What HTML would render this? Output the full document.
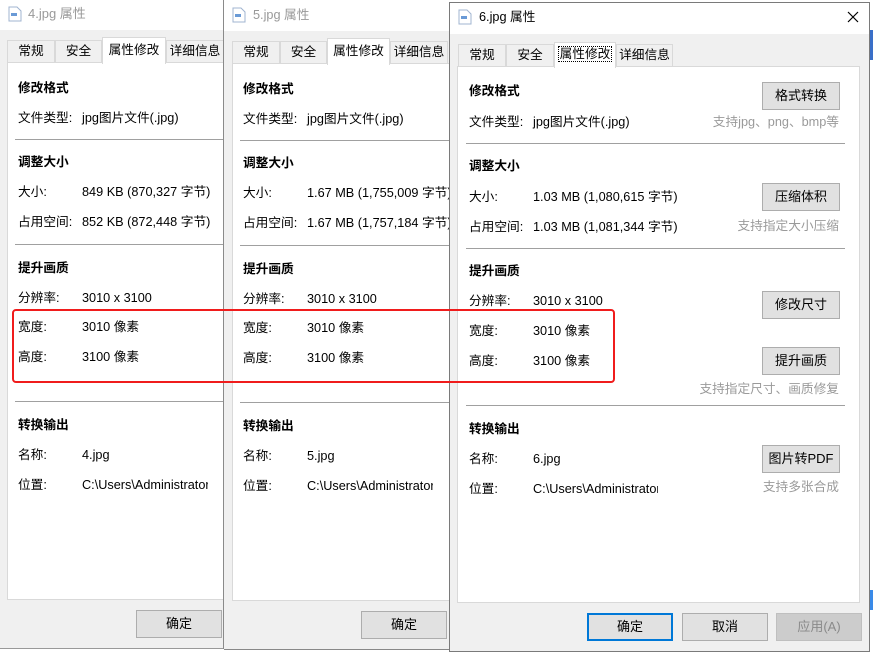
<!DOCTYPE html><html><head><meta charset="utf-8"><style>
*{margin:0;padding:0;box-sizing:border-box}
body{width:873px;height:656px;position:relative;overflow:hidden;background:#fff;font-family:"Liberation Sans","Noto Sans CJK SC",sans-serif;font-size:12.7px;color:#000}
.a{position:absolute;white-space:nowrap;line-height:16px}
.win{position:absolute;background:#f0f0f0;overflow:hidden}
.bx{position:absolute}
.b{font-weight:bold}
.btn{position:absolute;background:#e1e1e1;border:1px solid #adadad;text-align:center;line-height:25px;font-size:13px}
.hint{position:absolute;color:#9a9a9a;white-space:nowrap;line-height:16px;text-align:right}
.hr{position:absolute;height:1px;background:#a0a0a0}
.tab{position:absolute;border:1px solid #d9d9d9;border-bottom:none;background:#f0f0f0;text-align:center;line-height:20px}
</style></head><body>
<div style="position:absolute;left:869px;top:30px;width:4px;height:30px;background:#3a6fc8"></div>
<div style="position:absolute;left:869px;top:590px;width:4px;height:20px;background:#3a8ae8"></div>

<!-- window 1 -->
<div class="win" style="left:0;top:0;width:224px;height:649px;border-bottom:1px solid #999">
<div class="bx" style="left:0;top:0;width:224px;height:30px;background:#fff"></div>
<svg class="bx" style="left:8px;top:6px" width="14" height="16"><path d="M1 1h8l4 4v10H1z" fill="#fff" stroke="#a0b4d0"/><rect x="3" y="7" width="6" height="3" fill="#6a9ad6"/></svg>
<div class="a" style="left:28px;top:6px;color:#999;font-size:13px">4.jpg 属性</div>
<div class="tab" style="left:7px;top:40px;width:48px;height:23px">常规</div>
<div class="tab" style="left:55px;top:40px;width:47px;height:23px">安全</div>
<div class="tab" style="left:166px;top:40px;width:58px;height:23px">详细信息</div>
<div class="bx" style="left:7px;top:62px;width:230px;height:538px;background:#fff;border:1px solid #d9d9d9"></div>
<div class="tab" style="left:102px;top:37px;width:64px;height:27px;background:#fff;line-height:24px">属性修改</div>
<div class="a b" style="left:18px;top:80px">修改格式</div>
<div class="a" style="left:18px;top:110px">文件类型:</div><div class="a" style="left:82px;top:110px">jpg图片文件(.jpg)</div>
<div class="hr" style="left:15px;top:139px;width:209px"></div>
<div class="a b" style="left:18px;top:154px">调整大小</div>
<div class="a" style="left:18px;top:184px">大小:</div><div class="a" style="left:82px;top:184px">849 KB (870,327 字节)</div>
<div class="a" style="left:18px;top:214px">占用空间:</div><div class="a" style="left:82px;top:214px">852 KB (872,448 字节)</div>
<div class="hr" style="left:15px;top:244px;width:209px"></div>
<div class="a b" style="left:18px;top:260px">提升画质</div>
<div class="a" style="left:18px;top:290px">分辨率:</div><div class="a" style="left:82px;top:290px">3010 x 3100</div>
<div class="a" style="left:18px;top:319px">宽度:</div><div class="a" style="left:82px;top:319px">3010 像素</div>
<div class="a" style="left:18px;top:349px">高度:</div><div class="a" style="left:82px;top:349px">3100 像素</div>
<div class="hr" style="left:15px;top:401px;width:209px"></div>
<div class="a b" style="left:18px;top:417px">转换输出</div>
<div class="a" style="left:18px;top:447px">名称:</div><div class="a" style="left:82px;top:447px">4.jpg</div>
<div class="a" style="left:18px;top:477px">位置:</div><div class="a" style="left:82px;top:477px;width:126px;overflow:hidden">C:\Users\Administrator</div>
<div class="btn" style="left:136px;top:610px;width:86px;height:28px">确定</div>
</div>
<div class="bx" style="left:223px;top:0;width:1px;height:649px;background:#8a8a8a"></div>

<!-- window 2 -->
<div class="win" style="left:224px;top:0;width:227px;height:650px;border-bottom:1px solid #888">
<div class="bx" style="left:0;top:0;width:227px;height:31px;background:#fff"></div>
<svg class="bx" style="left:8px;top:7px" width="14" height="16"><path d="M1 1h8l4 4v10H1z" fill="#fff" stroke="#a0b4d0"/><rect x="3" y="7" width="6" height="3" fill="#6a9ad6"/></svg>
<div class="a" style="left:29px;top:7px;color:#999">5.jpg 属性</div>
<div class="tab" style="left:8px;top:41px;width:48px;height:23px">常规</div>
<div class="tab" style="left:56px;top:41px;width:47px;height:23px">安全</div>
<div class="tab" style="left:166px;top:41px;width:58px;height:23px">详细信息</div>
<div class="bx" style="left:8px;top:63px;width:230px;height:538px;background:#fff;border:1px solid #d9d9d9"></div>
<div class="tab" style="left:103px;top:38px;width:63px;height:27px;background:#fff;line-height:24px">属性修改</div>
<div class="a b" style="left:19px;top:81px">修改格式</div>
<div class="a" style="left:19px;top:111px">文件类型:</div><div class="a" style="left:83px;top:111px">jpg图片文件(.jpg)</div>
<div class="hr" style="left:16px;top:140px;width:211px"></div>
<div class="a b" style="left:19px;top:155px">调整大小</div>
<div class="a" style="left:19px;top:185px">大小:</div><div class="a" style="left:83px;top:185px">1.67 MB (1,755,009 字节)</div>
<div class="a" style="left:19px;top:215px">占用空间:</div><div class="a" style="left:83px;top:215px">1.67 MB (1,757,184 字节)</div>
<div class="hr" style="left:16px;top:245px;width:211px"></div>
<div class="a b" style="left:19px;top:261px">提升画质</div>
<div class="a" style="left:19px;top:291px">分辨率:</div><div class="a" style="left:83px;top:291px">3010 x 3100</div>
<div class="a" style="left:19px;top:320px">宽度:</div><div class="a" style="left:83px;top:320px">3010 像素</div>
<div class="a" style="left:19px;top:350px">高度:</div><div class="a" style="left:83px;top:350px">3100 像素</div>
<div class="hr" style="left:16px;top:402px;width:211px"></div>
<div class="a b" style="left:19px;top:418px">转换输出</div>
<div class="a" style="left:19px;top:448px">名称:</div><div class="a" style="left:83px;top:448px">5.jpg</div>
<div class="a" style="left:19px;top:478px">位置:</div><div class="a" style="left:83px;top:478px;width:126px;overflow:hidden">C:\Users\Administrator</div>
<div class="btn" style="left:137px;top:611px;width:86px;height:28px">确定</div>
</div>

<!-- window 3 -->
<div class="win" style="left:449px;top:2px;width:421px;height:650px;border:1px solid #7a7a7a">
<div class="bx" style="left:0;top:0;width:421px;height:31px;background:#fff"></div>
<svg class="bx" style="left:8px;top:6px" width="14" height="16"><path d="M1 1h8l4 4v10H1z" fill="#fff" stroke="#a0b4d0"/><rect x="3" y="7" width="6" height="3" fill="#6a9ad6"/></svg>
<div class="a" style="left:29px;top:6px">6.jpg 属性</div>
<svg class="bx" style="left:397px;top:8px" width="12" height="12"><path d="M1 1L11 11M11 1L1 11" stroke="#000" stroke-width="1.2"/></svg>
<div class="tab" style="left:8px;top:41px;width:48px;height:24px">常规</div>
<div class="tab" style="left:56px;top:41px;width:48px;height:24px">安全</div>
<div class="tab" style="left:166px;top:41px;width:57px;height:24px">详细信息</div>
<div class="bx" style="left:7px;top:63px;width:403px;height:537px;background:#fff;border:1px solid #d9d9d9"></div>
<div class="tab" style="left:104px;top:39px;width:62px;height:26px;background:#fff;line-height:22px"><span style="outline:1px dotted #000;padding:0 1px">属性修改</span></div>
<div class="a b" style="left:19px;top:80px">修改格式</div>
<div class="btn" style="left:312px;top:79px;width:78px;height:28px">格式转换</div>
<div class="a" style="left:19px;top:111px">文件类型:</div><div class="a" style="left:83px;top:111px">jpg图片文件(.jpg)</div>
<div class="hint" style="right:30px;top:111px">支持jpg、png、bmp等</div>
<div class="hr" style="left:16px;top:140px;width:379px"></div>
<div class="a b" style="left:19px;top:155px">调整大小</div>
<div class="a" style="left:19px;top:186px">大小:</div><div class="a" style="left:83px;top:186px">1.03 MB (1,080,615 字节)</div>
<div class="btn" style="left:312px;top:180px;width:78px;height:28px">压缩体积</div>
<div class="a" style="left:19px;top:216px">占用空间:</div><div class="a" style="left:83px;top:216px">1.03 MB (1,081,344 字节)</div>
<div class="hint" style="right:30px;top:215px">支持指定大小压缩</div>
<div class="hr" style="left:16px;top:245px;width:379px"></div>
<div class="a b" style="left:19px;top:260px">提升画质</div>
<div class="a" style="left:19px;top:290px">分辨率:</div><div class="a" style="left:83px;top:290px">3010 x 3100</div>
<div class="btn" style="left:312px;top:288px;width:78px;height:28px">修改尺寸</div>
<div class="a" style="left:19px;top:320px">宽度:</div><div class="a" style="left:83px;top:320px">3010 像素</div>
<div class="a" style="left:19px;top:350px">高度:</div><div class="a" style="left:83px;top:350px">3100 像素</div>
<div class="btn" style="left:312px;top:344px;width:78px;height:28px">提升画质</div>
<div class="hint" style="right:30px;top:378px">支持指定尺寸、画质修复</div>
<div class="hr" style="left:16px;top:402px;width:379px"></div>
<div class="a b" style="left:19px;top:418px">转换输出</div>
<div class="a" style="left:19px;top:448px">名称:</div><div class="a" style="left:83px;top:448px">6.jpg</div>
<div class="btn" style="left:312px;top:442px;width:78px;height:28px">图片转PDF</div>
<div class="a" style="left:19px;top:478px">位置:</div><div class="a" style="left:83px;top:478px;width:125px;overflow:hidden">C:\Users\Administrator</div>
<div class="hint" style="right:30px;top:476px">支持多张合成</div>
<div class="btn" style="left:137px;top:610px;width:86px;height:28px;border:2px solid #0078d7;line-height:24px">确定</div>
<div class="btn" style="left:232px;top:610px;width:86px;height:28px">取消</div>
<div class="btn" style="left:326px;top:610px;width:86px;height:28px;background:#cccccc;border-color:#bfbfbf;color:#8a8a8a">应用(A)</div>
</div>

<div class="bx" style="left:12px;top:309px;width:603px;height:74px;border:2px solid #f01c1c;border-radius:4px"></div>
</body></html>
